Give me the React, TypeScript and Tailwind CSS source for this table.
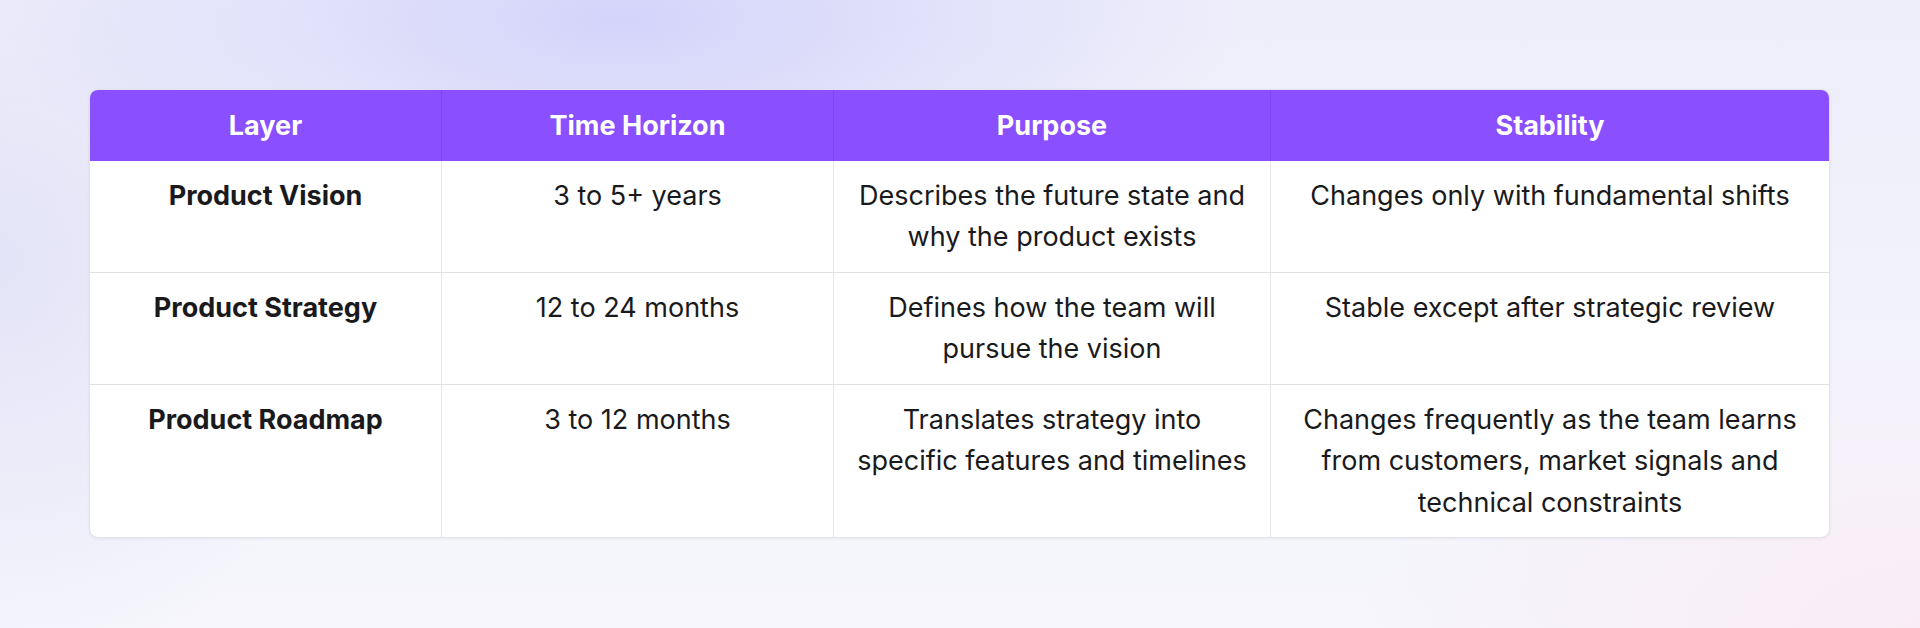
import React from "react";

const rows = [
  {
    layer: "Product Vision",
    horizon: "3 to 5+ years",
    purpose: ["Describes the future state and", "why the product exists"],
    stability: ["Changes only with fundamental shifts"],
  },
  {
    layer: "Product Strategy",
    horizon: "12 to 24 months",
    purpose: ["Defines how the team will", "pursue the vision"],
    stability: ["Stable except after strategic review"],
  },
  {
    layer: "Product Roadmap",
    horizon: "3 to 12 months",
    purpose: ["Translates strategy into", "specific features and timelines"],
    stability: [
      "Changes frequently as the team learns",
      "from customers, market signals and",
      "technical constraints",
    ],
  },
];

const headers = ["Layer", "Time Horizon", "Purpose", "Stability"];

function Lines({ lines }: { lines: string[] }) {
  return (
    <>
      {lines.map((l, i) => (
        <span key={i} className="block whitespace-nowrap">
          {l}
        </span>
      ))}
    </>
  );
}

export default function App() {
  return (
    <div
      className="w-[1920px] h-[628px] overflow-hidden bg-[#f4f4fb] bg-[radial-gradient(ellipse_620px_230px_at_620px_20px,#d4d4fb_0%,rgba(214,214,250,0.6)_45%,rgba(244,244,251,0)_100%),radial-gradient(ellipse_560px_280px_at_1920px_628px,#f9ecf6_0%,rgba(249,236,246,0)_100%),radial-gradient(ellipse_360px_420px_at_0px_260px,#e4e4f8_0%,rgba(228,228,248,0)_100%),linear-gradient(180deg,#eeeefb_0%,#f6f6fc_100%)] pt-[89px] pl-[89px] pr-[90px]"
      style={{ fontFamily: "Inter, 'Noto Sans', sans-serif" }}
    >
      <div className="rounded-[9px] overflow-hidden border border-[#e2e2ea] bg-white shadow-[0_1px_3px_rgba(40,40,90,0.06)]">
        <div className="grid grid-cols-[352px_392px_437px_1fr] bg-[#8a4fff]">
          {headers.map((h, i) => (
            <div
              key={h}
              className={`text-white font-bold text-[27px] leading-[41.5px] text-center pt-[15px] pb-[14px] ${
                i < 3 ? "border-r border-[#8146f2]" : ""
              }`}
            >
              {h}
            </div>
          ))}
        </div>
        {rows.map((r, ri) => (
          <div
            key={r.layer}
            className={`grid grid-cols-[352px_392px_437px_1fr] text-[#1a1a1c] text-[27px] leading-[41.5px] text-center ${
              ri > 0 ? "border-t border-[#e2e2e6]" : ""
            }`}
          >
            <div className="font-bold py-[14px] border-r border-[#e6e6ea]">{r.layer}</div>
            <div className="py-[14px] border-r border-[#e6e6ea]">{r.horizon}</div>
            <div className="py-[14px] border-r border-[#e6e6ea]">
              <Lines lines={r.purpose} />
            </div>
            <div className="py-[14px]">
              <Lines lines={r.stability} />
            </div>
          </div>
        ))}
      </div>
    </div>
  );
}
